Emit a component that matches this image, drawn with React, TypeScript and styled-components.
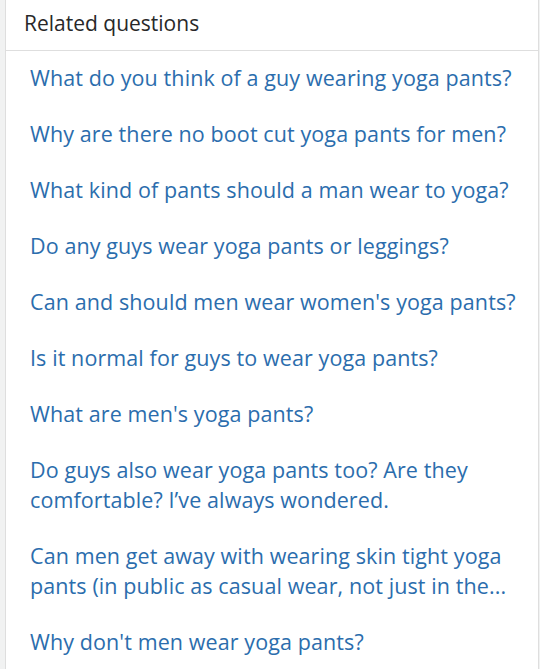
import styled, { createGlobalStyle } from 'styled-components';

const GlobalStyle = createGlobalStyle`
  body {
    margin: 0;
    background-color: #f1f2f2;
    font-family: 'Open Sans', 'Noto Sans', sans-serif;
  }
`;

const Page = styled.div`
  padding-left: 5px;
  padding-right: 1px;
  height: 669px;
  overflow: hidden;
`;

const Card = styled.section`
  background-color: #ffffff;
  border-left: 1px solid #dedede;
  border-right: 1px solid #dedede;
  min-height: 669px;
`;

const Header = styled.div`
  height: 51px;
  box-sizing: border-box;
  padding: 9px 18px 0;
  border-bottom: 1px solid #dedede;
  font-size: 21px;
  font-weight: 500;
  color: #282829;
  line-height: 29px;
`;

const List = styled.ul`
  list-style: none;
  margin: 0;
  padding: 0;
`;

const Item = styled.li`
  padding: 12px 18px 14px 24px;
`;

const QuestionLink = styled.a`
  font-size: 21.5px;
  letter-spacing: 0.1px;
  line-height: 30px;
  color: #2b6dad;
  text-decoration: none;
  cursor: pointer;
`;

const questions = [
  'What do you think of a guy wearing yoga pants?',
  'Why are there no boot cut yoga pants for men?',
  'What kind of pants should a man wear to yoga?',
  'Do any guys wear yoga pants or leggings?',
  "Can and should men wear women's yoga pants?",
  'Is it normal for guys to wear yoga pants?',
  "What are men's yoga pants?",
  'Do guys also wear yoga pants too? Are they comfortable? I’ve always wondered.',
  'Can men get away with wearing skin tight yoga pants (in public as casual wear, not just in the...',
  "Why don't men wear yoga pants?",
];

const App = () => {
  return (
    <Page>
      <GlobalStyle />
      <Card>
        <Header>Related questions</Header>
        <List>
          {questions.map((q) => (
            <Item key={q}>
              <QuestionLink>{q}</QuestionLink>
            </Item>
          ))}
        </List>
      </Card>
    </Page>
  );
};

export default App;
